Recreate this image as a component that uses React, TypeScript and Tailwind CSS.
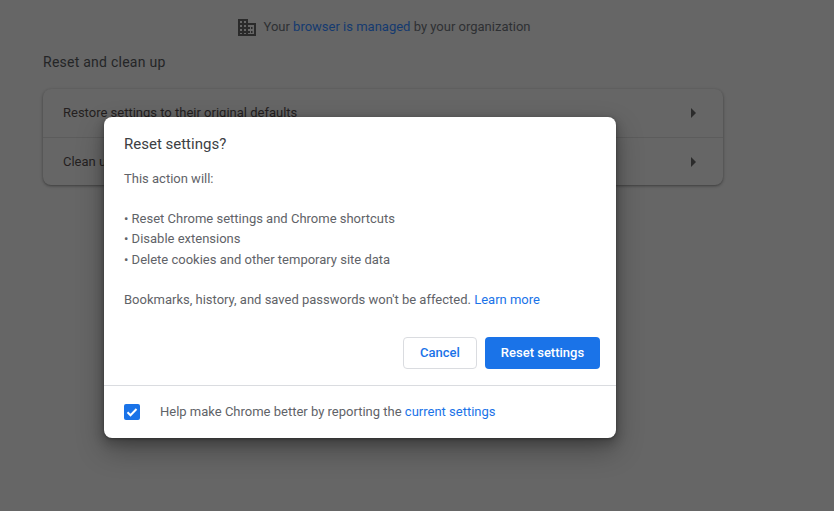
export default function App() {
  return (
    <div className="relative h-[511px] w-[834px] overflow-hidden bg-[#666666] font-['Roboto',sans-serif] text-[13px]">
      {/* settings page, dimmed */}
      <div className="flex h-[54px] items-center justify-center gap-[8px] pr-[66px] text-[#2e3033]">
        <svg width="18" height="18" viewBox="0 0 18 18" className="text-[#2a2a2a]" fill="currentColor">
          <path
            fillRule="evenodd"
            d="M0 1h10v4h8v13H0V1zm2 2v2h2V3H2zm4 0v2h2V3H6zM2 7v2h2V7H2zm4 0v2h2V7H6zm-4 4v2h2v-2H2zm4 0v2h2v-2H6zm-4 4v1h2v-1H2zm4 0v1h2v-1H6zm4-8v2h2v2h-2v2h2v2h-2v1h6V7h-6zm3 2h1.5v2H13V9zm0 4h1.5v2H13v-2z"
          />
        </svg>
        <span>
          Your <span className="text-[#143a70]">browser is managed</span> by your organization
        </span>
      </div>
      <div className="pl-[43px] pr-[111px]">
        <h2 className="text-[14px] leading-[17px] tracking-[0.25px] text-[#242526]">Reset and clean up</h2>
        <div className="mt-[18px] rounded-[8px] bg-[#666666] text-[#241f1f] shadow-[0_1px_2px_rgba(0,0,0,0.25),0_1px_3px_1px_rgba(0,0,0,0.12)]">
          <div className="flex h-[48px] items-center justify-between pl-[20px] pr-[27px]">
            <span>Restore settings to their original defaults</span>
            <Arrow />
          </div>
          <div className="flex h-[48px] items-center justify-between border-t border-[#5c5c5c] pl-[20px] pr-[27px]">
            <span>Clean up computer</span>
            <Arrow />
          </div>
        </div>
      </div>

      {/* modal */}
      <div className="absolute left-[104px] top-[117px] h-[321px] w-[512px] rounded-[8px] bg-white shadow-[0_4px_8px_3px_rgba(0,0,0,0.15),0_1px_3px_rgba(0,0,0,0.3),0_12px_28px_rgba(0,0,0,0.3)]">
        <div className="px-[20px] pt-[17px]">
          <h1 className="text-[15px] leading-[20px] text-[#3c4043]">Reset settings?</h1>
          <div className="mt-[15px] leading-[20.2px] text-[#5f6368]">
            <p>This action will:</p>
            <p className="mt-[20px]">• Reset Chrome settings and Chrome shortcuts</p>
            <p>• Disable extensions</p>
            <p>• Delete cookies and other temporary site data</p>
            <p className="mt-[20px]">
              Bookmarks, history, and saved passwords won't be affected.{" "}
              <span className="text-[#1a73e8]">Learn more</span>
            </p>
          </div>
        </div>
        <div className="mt-[27px] flex justify-end gap-[8px] pr-[16px]">
          <button className="h-[32px] w-[74px] rounded-[4px] border border-[#dadce0] bg-white text-[13px] font-medium text-[#1a73e8]">
            Cancel
          </button>
          <button className="h-[32px] w-[115px] rounded-[4px] bg-[#1a73e8] text-[13px] font-medium text-white">
            Reset settings
          </button>
        </div>
        <div className="mt-[16px] flex h-[52px] items-center border-t border-[#dadce0] pl-[20px]">
          <div className="flex h-[16px] w-[16px] items-center justify-center rounded-[2px] bg-[#1a73e8]">
            <svg width="12" height="12" viewBox="0 0 12 12" fill="none" stroke="white" strokeWidth="2">
              <path d="M1.5 6.2 4.5 9.2 10.5 3" />
            </svg>
          </div>
          <span className="ml-[20px] text-[#5f6368]">
            Help make Chrome better by reporting the <span className="text-[#1a73e8]">current settings</span>
          </span>
        </div>
      </div>
    </div>
  );
}

function Arrow() {
  return (
    <svg width="5" height="10" viewBox="0 0 5 10" fill="#2b2b2b">
      <path d="M0 0 5 5 0 10z" />
    </svg>
  );
}
